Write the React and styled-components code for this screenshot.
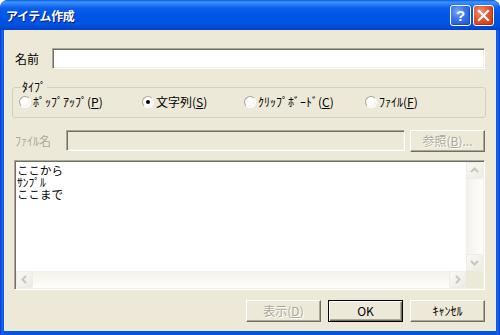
import React from 'react';
import styled, { createGlobalStyle } from 'styled-components';

// ============================================
// GLOBAL
// ============================================

const GlobalStyle = createGlobalStyle`
  html, body {
    margin: 0;
    padding: 0;
    background: #ffffff;
  }
  body {
    font-family: "Noto Sans CJK JP", "Noto Sans", sans-serif;
    font-size: 12px;
    color: #000;
  }
`;

const FONT = `"Noto Sans CJK JP", "Noto Sans", sans-serif`;
const FACE = '#ECE9D8';

// ============================================
// WINDOW FRAME
// ============================================

const Window = styled.div`
  width: 500px;
  height: 335px;
  box-sizing: border-box;
  display: flex;
  flex-direction: column;
  background: linear-gradient(to right, #0831D9 0px, #166AEE 2px, #0855DD 4px, #0855DD 496px, #166AEE 498px, #0831D9 500px);
  border-radius: 8px 8px 0 0;
  overflow: hidden;
`;

const TitleBar = styled.div`
  height: 30px;
  flex: none;
  display: flex;
  align-items: center;
  padding: 0 6px 0 6px;
  background: linear-gradient(to bottom,
    #0A5AE0 0px, #3D95FF 2px, #2E82F8 4px, #0A5EEC 8px, #0055E5 16px,
    #0054E3 22px, #004FDB 26px, #0046D0 28px, #003FC4 30px);
`;

const Title = styled.div`
  flex: 1;
  color: #fff;
  font-family: ${FONT};
  font-size: 12px;
  font-weight: bold;
  letter-spacing: -0.4px;
  text-shadow: 1px 1px 0 #0A1883;
  padding-top: 1px;
`;

const CaptionButton = styled.div`
  width: 21px;
  height: 21px;
  box-sizing: border-box;
  margin-left: 2px;
  border: 1px solid #fff;
  border-radius: 3px;
  display: flex;
  align-items: center;
  justify-content: center;
  background: ${p => p.$close
    ? 'radial-gradient(circle at 35% 30%, #F09878 0%, #E2532C 45%, #C83A12 100%)'
    : 'radial-gradient(circle at 35% 30%, #7AA8FA 0%, #3872E8 45%, #1E56D8 100%)'};
  box-shadow: inset -1px -1px 1px rgba(0,0,0,0.25);
`;

const HelpGlyph = styled.span`
  color: #fff;
  font-family: "Liberation Sans", sans-serif;
  font-weight: bold;
  font-size: 15px;
  line-height: 15px;
`;

const Client = styled.div`
  flex: 1;
  margin: 0 4px 4px 4px;
  background: ${FACE};
  display: flex;
  flex-direction: column;
  padding: 18px 10px 9px 8px;
  font-family: ${FONT};
  font-size: 12px;
`;

// ============================================
// FORM PARTS
// ============================================

const Row = styled.div`
  display: flex;
  align-items: center;
  height: ${p => p.$h || 21}px;
  padding: 0 1px 0 3px;
  margin-top: ${p => p.$top || 0}px;
`;

const Label = styled.div`
  width: ${p => p.$w}px;
  flex: none;
  color: ${p => (p.$disabled ? '#ACA899' : '#000')};
  line-height: 12px;
`;

const Edit = styled.div`
  flex: 1;
  height: 21px;
  margin-right: ${p => p.$mr || 0}px;
  box-sizing: border-box;
  background: ${p => (p.$disabled ? FACE : '#fff')};
  border-top: 1px solid #ACA899;
  border-left: 1px solid #ACA899;
  border-bottom: 1px solid #fff;
  border-right: 1px solid #fff;
  box-shadow: inset 1px 1px 0 #716F64, inset -1px -1px 0 #F1EFE2;
`;

const Group = styled.fieldset`
  margin: 12px 0 0 0;
  padding: 3px 6px 1px 6px;
  border: 1px solid #D0D0BF;
  border-radius: 3px;
  height: 37px;
  box-sizing: border-box;
  display: flex;
  align-items: center;
`;

const Legend = styled.legend`
  padding: 0 1px;
  margin-left: 2px;
  font-size: 12px;
  line-height: 12px;
`;

const RadioItem = styled.div`
  width: ${p => p.$w}px;
  flex: none;
  display: flex;
  align-items: center;
  gap: 1px;
  line-height: 12px;
`;

const RadioCircle = styled.div`
  width: 12px;
  height: 12px;
  box-sizing: border-box;
  border-radius: 50%;
  border: 1px solid;
  border-color: #ACA899 #fff #fff #ACA899;
  background: radial-gradient(circle at 40% 40%, #ffffff 0%, #ffffff 40%, #E6E4DA 100%);
  display: flex;
  align-items: center;
  justify-content: center;
  margin-right: 1px;
  &::after {
    content: '';
    width: 4px;
    height: 4px;
    border-radius: 50%;
    background: ${p => (p.$checked ? '#000' : 'transparent')};
  }
`;

const Button = styled.div`
  width: 75px;
  height: 22px;
  flex: none;
  box-sizing: border-box;
  display: flex;
  align-items: center;
  justify-content: center;
  background: ${FACE};
  color: ${p => (p.$disabled ? '#ACA899' : '#000')};
  text-shadow: ${p => (p.$disabled ? '1px 1px 0 #fff' : 'none')};
  border: 1px solid;
  border-color: ${p => (p.$default ? '#000' : '#fff #716F64 #716F64 #fff')};
  box-shadow: ${p => p.$default
    ? 'inset 1px 1px 0 #fff, inset -1px -1px 0 #716F64, inset -2px -2px 0 #ACA899'
    : 'inset -1px -1px 0 #ACA899'};
  line-height: 12px;
`;

const ButtonBar = styled.div`
  display: flex;
  justify-content: flex-end;
  gap: 7px;
  margin-top: 10px;
  padding-right: 1px;
`;

// ============================================
// MULTI-LINE EDIT WITH SCROLLBARS
// ============================================

const TextBox = styled.div`
  margin: 9px 1px 0 2px;
  height: 130px;
  box-sizing: border-box;
  border-top: 1px solid #ACA899;
  border-left: 1px solid #ACA899;
  border-bottom: 1px solid #fff;
  border-right: 1px solid #fff;
  padding: 1px;
  background: #fff;
  box-shadow: inset 1px 1px 0 #716F64, inset -1px -1px 0 #F1EFE2;
  display: grid;
  grid-template-columns: 1fr 17px;
  grid-template-rows: 1fr 17px;
`;

const TextContent = styled.div`
  padding: 2px 1px 0 1px;
  line-height: 12px;
  font-size: 11.5px;
`;

const VTrack = styled.div`
  display: flex;
  flex-direction: column;
  justify-content: space-between;
  background: linear-gradient(to right, #F3F1EA, #FEFEFB);
`;

const HTrack = styled.div`
  display: flex;
  justify-content: space-between;
  background: linear-gradient(to bottom, #F3F1EA, #FEFEFB);
`;

const Corner = styled.div`
  background: ${FACE};
`;

const ScrollButton = styled.div`
  width: 17px;
  height: 17px;
  box-sizing: border-box;
  border: 1px solid #EEEDE5;
  border-radius: 2px;
  background: linear-gradient(to bottom right, #F9F9F6, #EDEBE3);
  display: flex;
  align-items: center;
  justify-content: center;
`;

const Chevron = ({ dir }) => {
  const paths = {
    up: 'M4 9 L7.5 5.5 L11 9',
    down: 'M4 6 L7.5 9.5 L11 6',
    left: 'M9 4 L5.5 7.5 L9 11',
    right: 'M6 4 L9.5 7.5 L6 11',
  };
  return (
    <svg width="15" height="15" viewBox="0 0 15 15">
      <path d={paths[dir]} fill="none" stroke="#C9C7BA" strokeWidth="2" />
    </svg>
  );
};

// ============================================
// REACT
// ============================================

const radios = [
  { text: 'ﾎﾟｯﾌﾟｱｯﾌﾟ', key: 'P', w: 123 },
  { text: '文字列', key: 'S', w: 102, checked: true },
  { text: 'ｸﾘｯﾌﾟﾎﾞｰﾄﾞ', key: 'C', w: 121 },
  { text: 'ﾌｧｲﾙ', key: 'F', w: 60 },
];

export default function App() {
  return (
    <>
      <GlobalStyle />
      <Window>
        <TitleBar>
          <Title>アイテム作成</Title>
          <CaptionButton>
            <HelpGlyph>?</HelpGlyph>
          </CaptionButton>
          <CaptionButton $close>
            <svg width="13" height="13" viewBox="0 0 13 13">
              <path d="M2 2 L11 11 M11 2 L2 11" stroke="#fff" strokeWidth="2.2" strokeLinecap="square" />
            </svg>
          </CaptionButton>
        </TitleBar>

        <Client>
          <Row>
            <Label $w={37}>名前</Label>
            <Edit />
          </Row>

          <Group>
            <Legend>ﾀｲﾌﾟ</Legend>
            {radios.map(r => (
              <RadioItem key={r.key} $w={r.w}>
                <RadioCircle $checked={r.checked} />
                <span>{r.text}(<u>{r.key}</u>)</span>
              </RadioItem>
            ))}
          </Group>

          <Row $top={12}>
            <Label $w={51} $disabled>ﾌｧｲﾙ名</Label>
            <Edit $disabled $mr={5} />
            <Button $disabled>参照(<u>B</u>)...</Button>
          </Row>

          <TextBox>
            <TextContent>
              <div>ここから</div>
              <div>ｻﾝﾌﾟﾙ</div>
              <div>ここまで</div>
            </TextContent>
            <VTrack>
              <ScrollButton><Chevron dir="up" /></ScrollButton>
              <ScrollButton><Chevron dir="down" /></ScrollButton>
            </VTrack>
            <HTrack>
              <ScrollButton><Chevron dir="left" /></ScrollButton>
              <ScrollButton><Chevron dir="right" /></ScrollButton>
            </HTrack>
            <Corner />
          </TextBox>

          <ButtonBar>
            <Button $disabled>表示(<u>D</u>)</Button>
            <Button $default>OK</Button>
            <Button>ｷｬﾝｾﾙ</Button>
          </ButtonBar>
        </Client>
      </Window>
    </>
  );
}
